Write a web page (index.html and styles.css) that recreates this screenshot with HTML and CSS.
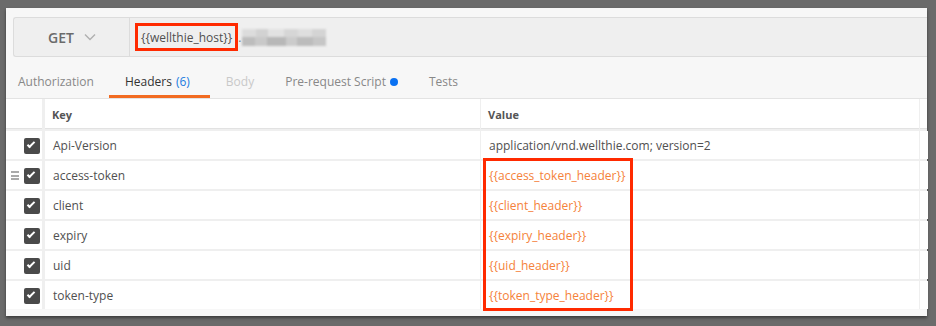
FILE: index.html
```html
<!DOCTYPE html>
<html lang="en">
<head>
  <meta charset="UTF-8"/>
  <title>Request headers</title>
  <link rel="stylesheet" href="styles.css">
</head>
<body>
  <div class="panel">
    <!-- URL bar -->
    <div class="url-bar">
      <div class="method">
        <span>GET</span>
        <svg class="chevron" width="12" height="8" viewBox="0 0 12 8"><path d="M1 1.5 L6 6.5 L11 1.5" fill="none" stroke="#b0b0b0" stroke-width="1.4"/></svg>
      </div>
      <div class="url">
        <span class="mark var">{{wellthie_host}}</span><span class="dot-sep">.</span>
        <span class="blurred">
          <i class="b1"></i><i class="b2"></i><i class="b3"></i><i class="b4"></i><i class="b5"></i><i class="b6"></i>
        </span>
      </div>
    </div>

    <!-- Tabs -->
    <div class="tabs">
      <span class="tab">Authorization</span>
      <span class="tab active">Headers <em>(6)</em></span>
      <span class="tab disabled">Body</span>
      <span class="tab">Pre-request Script <b class="dot"></b></span>
      <span class="tab">Tests</span>
    </div>

    <!-- Headers table -->
    <div class="table">
      <div class="grid">
        <div class="cell head"></div>
        <div class="cell head">Key</div>
        <div class="cell head">Value</div>
        <div class="cell head"></div>

        <div class="cell chk"><span class="box"></span></div>
        <div class="cell">Api-Version</div>
        <div class="cell">application/vnd.wellthie.com; version=2</div>
        <div class="cell"></div>

        <div class="cell chk"><span class="handle"></span><span class="box"></span></div>
        <div class="cell">access-token</div>
        <div class="cell var">{{access_token_header}}</div>
        <div class="cell"></div>

        <div class="cell chk"><span class="box"></span></div>
        <div class="cell">client</div>
        <div class="cell var">{{client_header}}</div>
        <div class="cell"></div>

        <div class="cell chk"><span class="box"></span></div>
        <div class="cell">expiry</div>
        <div class="cell var">{{expiry_header}}</div>
        <div class="cell"></div>

        <div class="cell chk"><span class="box"></span></div>
        <div class="cell">uid</div>
        <div class="cell var">{{uid_header}}</div>
        <div class="cell"></div>

        <div class="cell chk"><span class="box"></span></div>
        <div class="cell">token-type</div>
        <div class="cell var">{{token_type_header}}</div>
        <div class="cell"></div>
      </div>
      <div class="highlight"></div>
    </div>
  </div>
</body>
</html>
```

FILE: styles.css
```css
*, *::before, *::after { box-sizing: border-box; }

body {
  margin: 0;
  padding: 8px 9px 0 6px;
  height: 326px;
  overflow: hidden;
  background: #6b6b6b;
  font-family: 'Open Sans', 'Noto Sans', sans-serif;
  color: #505050;
}

.panel {
  width: 921px;
  height: 308px;
  background: #f7f7f7;
  padding-top: 9px;
  box-shadow: 0 2px 3px rgba(0,0,0,.45);
}

/* URL bar */
.url-bar {
  display: flex;
  height: 40px;
  margin-left: 7px;
  background: #efefef;
  border: 1px solid #dcdcdc;
  border-right: none;
  border-radius: 3px 0 0 3px;
}
.method {
  width: 116px;
  display: flex;
  align-items: center;
  padding-left: 34px;
  gap: 10px;
  border-right: 1px solid #dcdcdc;
  font-size: 14px;
  font-weight: 600;
  color: #6a6a6a;
}
.url {
  display: flex;
  align-items: center;
  padding-left: 5px;
  font-size: 12px;
}
.mark {
  border: 3px solid #ff2a00;
  padding: 2px 3px;
  height: 28px;
  line-height: 20px;
}
.dot-sep { color: #777; }
.blurred {
  display: grid;
  grid-template-columns: 14px 12px 16px 14px 14px 14px;
  grid-template-rows: 8px 9px;
  filter: blur(1.2px);
  margin-top: 1px;
}
.blurred i { display: block; }
.blurred .b1 { background: #dcdcdc; grid-row: 1; }
.blurred .b2 { background: #d2d2d2; grid-row: 1; }
.blurred .b3 { background: #e2e2e2; grid-row: 1; }
.blurred .b4 { background: #d6d6d6; grid-row: 1; }
.blurred .b5 { background: #dedede; grid-row: 1; }
.blurred .b6 { background: #d4d4d4; grid-row: 1; }
.blurred::after {
  content: '';
  grid-row: 2;
  grid-column: 1 / 7;
  background: linear-gradient(90deg, #bdbdbd 0 16%, #c9c9c9 16% 30%, #b8b8b8 30% 52%, #cbcbcb 52% 66%, #bcbcbc 66% 84%, #c6c6c6 84%);
}

/* Tabs */
.tabs {
  display: flex;
  height: 42px;
  padding-left: 12px;
  border-bottom: 1px solid #e3e3e3;
  font-size: 12px;
}
.tab {
  display: flex;
  align-items: center;
  padding: 11px 15px 0 16px;
  color: #888;
  border-bottom: 3px solid transparent;
}
.tab:first-child { padding-left: 0; }
.tab.active { color: #333; border-bottom-color: #f26b21; padding-right: 20px; }
.tab.active em { font-style: normal; color: #1a7ae0; margin-left: 4px; }
.tab.disabled { color: #c9c9c9; }
.dot {
  width: 8px; height: 8px;
  border-radius: 50%;
  background: #0a71f2;
  margin-left: 4px;
}

/* Table */
.table { position: relative; }
.grid {
  display: grid;
  grid-template-columns: 36px 437px 438px 6px;
  grid-template-rows: 30px repeat(6, 28px);
  column-gap: 1px;
  row-gap: 2px;
  background: #efefef;
}
.cell {
  background: #fff;
  display: flex;
  align-items: center;
  padding: 1px 0 0 8px;
  font-size: 12px;
  color: #505050;
}
.grid .cell:nth-child(4n+2) { margin-left: 2px; }
.cell.head {
  font-size: 11px;
  font-weight: 700;
  color: #555;
  padding-left: 7px;
  border-bottom: 1px solid #e2e2e2;
}
.cell.var { color: #f5823a; }
.cell.chk {
  position: relative;
  padding-left: 18px;
}
.box {
  width: 16px; height: 16px;
  border-radius: 2px;
  background: #4a4a4a;
  position: relative;
}
.box::after {
  content: '';
  position: absolute;
  left: 5px; top: 2px;
  width: 4px; height: 8px;
  border: solid #fff;
  border-width: 0 2px 2px 0;
  transform: rotate(45deg);
}
.handle {
  position: absolute;
  left: 5px; top: 10px;
  width: 8px; height: 9px;
  background: linear-gradient(#aaa 0 2px, transparent 2px 4px, #aaa 4px 6px, transparent 6px 7px, #aaa 7px 9px);
}

/* Annotation around variable values */
.highlight {
  position: absolute;
  left: 477px;
  top: 59px;
  width: 150px;
  height: 153px;
  border: 3px solid #ff2a00;
}
```
